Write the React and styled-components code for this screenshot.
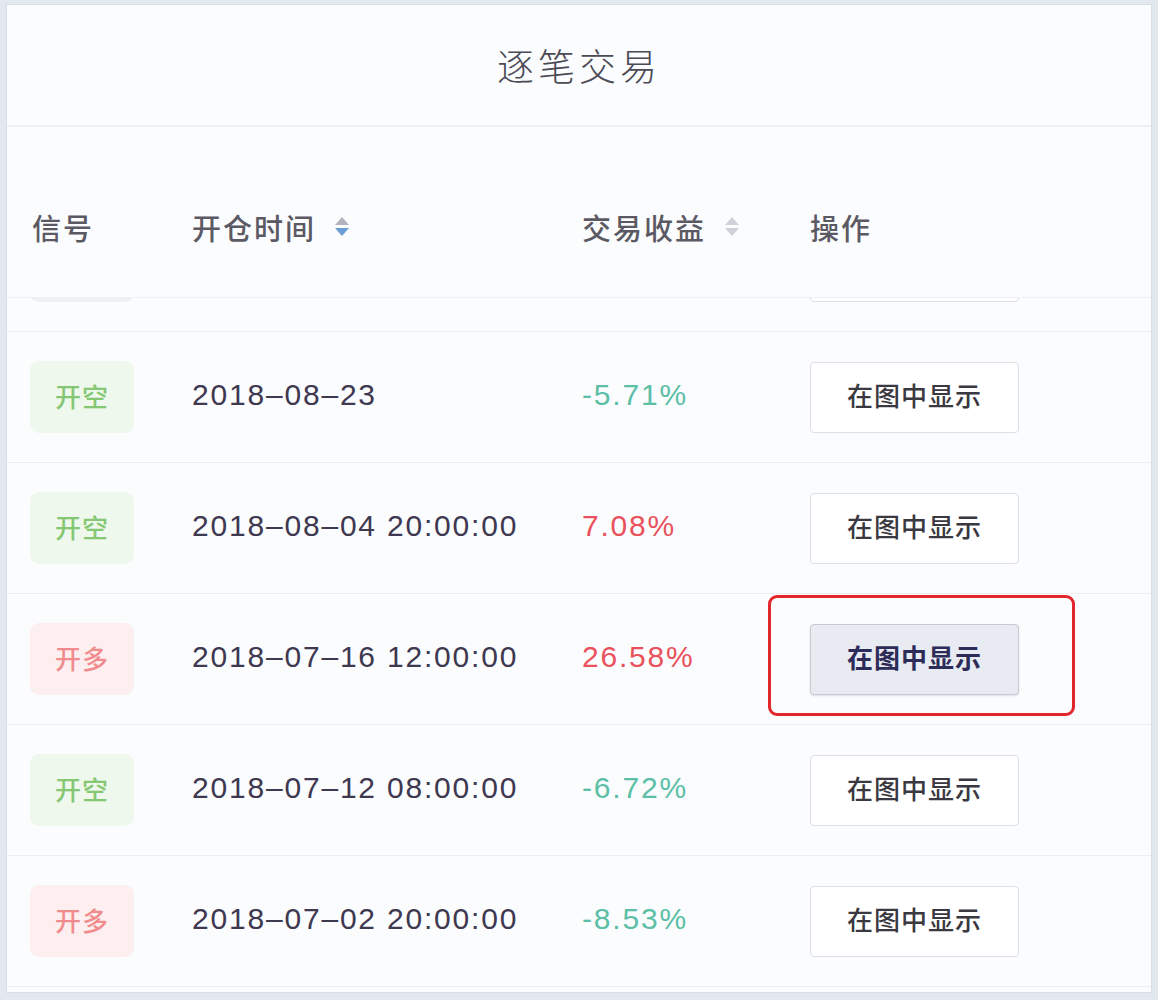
import React, { useLayoutEffect, useRef } from "react";
import styled, { createGlobalStyle } from "styled-components";

const Global = createGlobalStyle`
  html, body { margin: 0; padding: 0; }
  body {
    background: #e3e7ee;
    font-family: "Liberation Sans", "Noto Sans CJK SC", sans-serif;
  }
`;

const Page = styled.div`
  padding: 4px 6px 0 6px;
  height: 1000px;
  box-sizing: border-box;
`;

const Panel = styled.div`
  width: 1146px;
  height: 989px;
  box-sizing: border-box;
  background: #fbfcfe;
  border: 1px solid #d9dde5;
  display: flex;
  flex-direction: column;
`;

const TitleBar = styled.div`
  height: 122px;
  flex: none;
  display: flex;
  align-items: center;
  justify-content: center;
  border-bottom: 2px solid #eceef2;
  box-sizing: border-box;
`;

const Title = styled.h1`
  margin: 0;
  font-family: "Noto Sans CJK SC", sans-serif;
  font-weight: 300;
  font-size: 37px;
  letter-spacing: 4px;
  color: #4b4a55;
`;

const Grid = styled.div`
  display: grid;
  grid-template-columns: 162px 390px 228px 1fr;
  align-items: center;
  padding-left: 23px;
`;

const HeaderRow = styled(Grid)`
  height: 171px;
  flex: none;
  box-sizing: border-box;
  padding-top: 30px;
  border-bottom: 1px solid #eef0f4;
`;

const HeadCell = styled.div`
  display: flex;
  align-items: center;
  gap: 18px;
  padding-left: ${(p) => (p.$first ? "2px" : "0")};
  font-family: "Noto Sans CJK SC", sans-serif;
  font-weight: 500;
  font-size: 29px;
  letter-spacing: 2px;
  color: #5b5a64;
`;

const Body = styled.div`
  height: 689px;
  flex: none;
  overflow: hidden;
`;

const Row = styled(Grid)`
  position: relative;
  height: 131px;
  box-sizing: border-box;
  border-bottom: 1px solid #eceef2;
`;

const tagColors = {
  long: { bg: "#fdefef", fg: "#f08b8e" },
  short: { bg: "#eef8ec", fg: "#86c774" },
  none: { bg: "#eef0f4", fg: "transparent" },
};

const Tag = styled.div`
  width: 104px;
  height: 72px;
  box-sizing: border-box;
  padding-bottom: 4px;
  border-radius: 9px;
  display: flex;
  align-items: center;
  justify-content: center;
  font-family: "Noto Sans CJK SC", sans-serif;
  font-size: 26px;
  font-weight: 500;
  letter-spacing: 1px;
  background: ${(p) => tagColors[p.$kind].bg};
  color: ${(p) => tagColors[p.$kind].fg};
`;

const DateText = styled.div`
  padding-bottom: 4px;
  font-family: "Liberation Sans", sans-serif;
  font-size: 30px;
  letter-spacing: 1.8px;
  color: #3e3850;
`;

const Profit = styled.div`
  padding-bottom: 4px;
  font-family: "Liberation Sans", sans-serif;
  font-size: 30px;
  letter-spacing: 1.8px;
  color: ${(p) => (p.$up ? "#e9525c" : "#5cbfa6")};
`;

const ShowButton = styled.button`
  width: 209px;
  height: 71px;
  box-sizing: border-box;
  border-radius: 4px;
  border: 1px solid ${(p) => (p.$active ? "#c6cad3" : "#dcdfe6")};
  background: ${(p) => (p.$active ? "#e8ebf1" : "#ffffff")};
  box-shadow: ${(p) => (p.$active ? "0 1px 2px rgba(60,70,90,0.15)" : "none")};
  font-family: "Noto Sans CJK SC", sans-serif;
  font-size: 26px;
  font-weight: ${(p) => (p.$active ? 700 : 500)};
  letter-spacing: 1px;
  color: ${(p) => (p.$active ? "#2d2b58" : "#3a3840")};
  padding: 0 0 5px 0;
  cursor: pointer;
`;

const Highlight = styled.div`
  position: absolute;
  left: 761px;
  top: 1px;
  width: 307px;
  height: 121px;
  box-sizing: border-box;
  border: 3px solid #e3262b;
  border-radius: 9px;
  pointer-events: none;
`;

const SortIcon = ({ active }) => (
  <svg width="16" height="24" viewBox="0 0 16 24" aria-hidden="true">
    <polygon points="8,2 15,10 1,10" fill={active ? "#aeb3be" : "#cdd1d8"} />
    <polygon points="1,13 15,13 8,21" fill={active ? "#6c9ed6" : "#cdd1d8"} />
  </svg>
);

const rows = [
  { kind: "short", date: "2018–08–23", profit: "-5.71%", up: false },
  { kind: "short", date: "2018–08–04 20:00:00", profit: "7.08%", up: true },
  { kind: "long", date: "2018–07–16 12:00:00", profit: "26.58%", up: true, active: true },
  { kind: "short", date: "2018–07–12 08:00:00", profit: "-6.72%", up: false },
  { kind: "long", date: "2018–07–02 20:00:00", profit: "-8.53%", up: false },
];

const labels = { long: "开多", short: "开空" };

export default function App() {
  const bodyRef = useRef(null);
  useLayoutEffect(() => {
    if (bodyRef.current) bodyRef.current.scrollTop = 97;
  }, []);
  return (
    <Page>
      <Global />
      <Panel>
        <TitleBar>
          <Title>逐笔交易</Title>
        </TitleBar>
        <HeaderRow>
          <HeadCell $first>信号</HeadCell>
          <HeadCell>
            开仓时间 <SortIcon active />
          </HeadCell>
          <HeadCell>
            交易收益 <SortIcon />
          </HeadCell>
          <HeadCell>操作</HeadCell>
        </HeaderRow>
        <Body ref={bodyRef}>
          <Row aria-hidden="true">
            <div>
              <Tag $kind="none" />
            </div>
            <div />
            <div />
            <div>
              <ShowButton tabIndex={-1} />
            </div>
          </Row>
          {rows.map((r, i) => (
            <Row key={i}>
              <div>
                <Tag $kind={r.kind}>{labels[r.kind]}</Tag>
              </div>
              <DateText>{r.date}</DateText>
              <Profit $up={r.up}>{r.profit}</Profit>
              <div>
                <ShowButton $active={r.active}>在图中显示</ShowButton>
              </div>
              {r.active && <Highlight />}
            </Row>
          ))}
        </Body>
      </Panel>
    </Page>
  );
}
